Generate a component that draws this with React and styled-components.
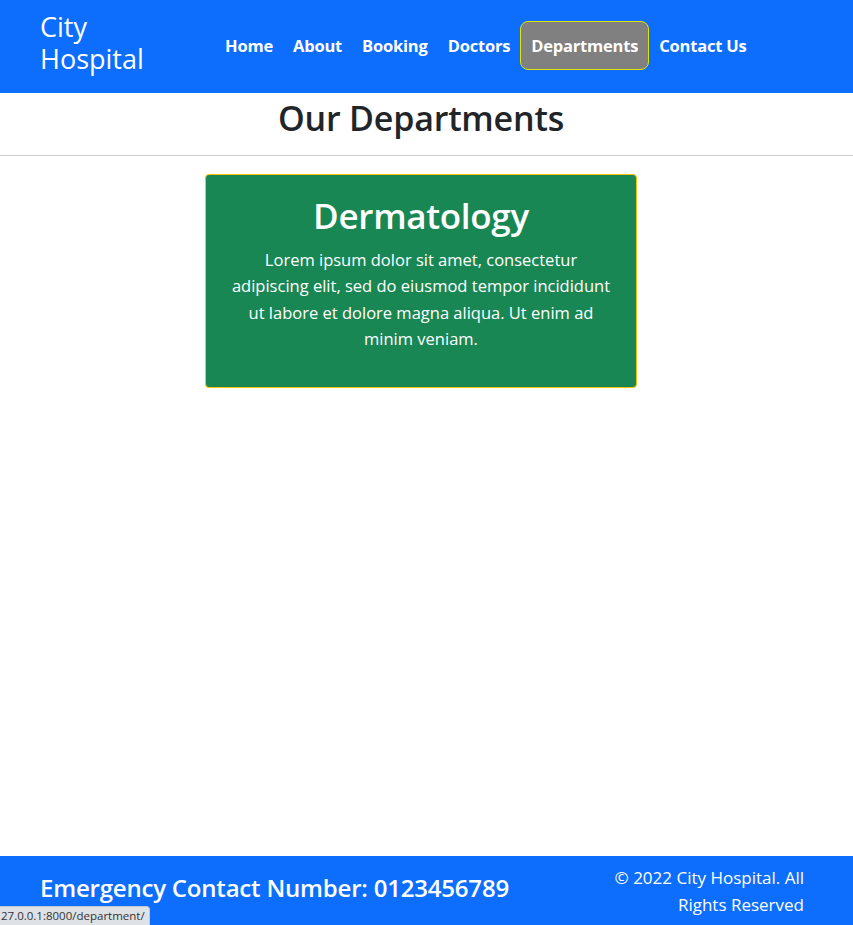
import React from 'react';
import styled, { createGlobalStyle } from 'styled-components';

const GlobalStyle = createGlobalStyle`
  html, body {
    margin: 0;
    padding: 0;
  }
  body {
    font-family: "Open Sans", "Noto Sans", sans-serif;
    color: #212529;
    background: #fff;
  }
  * { box-sizing: border-box; }
`;

const Page = styled.div`
  min-height: 100vh;
  display: flex;
  flex-direction: column;
`;

const Navbar = styled.nav`
  background: #0d6efd;
  height: 93px;
  display: flex;
  align-items: center;
  padding: 0 40px;
`;

const Brand = styled.a`
  color: #fff;
  font-size: 27px;
  font-weight: 500;
  line-height: 32px;
  width: 120px;
  text-decoration: none;
  margin-top: -7px;
`;

const NavList = styled.ul`
  list-style: none;
  display: flex;
  align-items: center;
  margin: -2px 0 0 55px;
  padding: 0;
`;

const NavLink = styled.a`
  display: block;
  color: #fff;
  font-size: 16.5px;
  font-weight: 700;
  text-decoration: none;
  padding: ${p => (p.$active ? '12px 10px' : '12px 9px')};
  border-radius: 8px;
  border: 1px solid ${p => (p.$active ? '#e4e400' : 'transparent')};
  background: ${p => (p.$active ? '#808080' : 'transparent')};
  letter-spacing: -0.2px;
`;

const Main = styled.main`
  flex: 1;
  padding-right: 11px;
`;

const Title = styled.h1`
  margin: 0;
  padding-top: 4px;
  text-align: center;
  font-size: 34px;
  font-weight: 600;
  line-height: 42px;
  letter-spacing: -0.2px;
`;

const Rule = styled.hr`
  margin: 16px -11px 18px 0;
  border: 0;
  border-top: 1px solid #cfcfcf;
`;

const Card = styled.section`
  width: 432px;
  margin: 0 auto;
  background: #198754;
  border: 1px solid #ffc107;
  border-radius: 4px;
  color: #fff;
  text-align: center;
  padding: 18px 20px 34px;
`;

const CardTitle = styled.h2`
  margin: 0 0 8px;
  font-size: 35px;
  font-weight: 600;
  line-height: 46px;
  letter-spacing: -0.3px;
`;

const CardText = styled.p`
  margin: 0;
  font-size: 16.5px;
  line-height: 26.4px;
`;

const Footer = styled.footer`
  background: #0d6efd;
  color: #fff;
  height: 69px;
  display: grid;
  grid-template-columns: 1fr 215px;
  align-items: center;
  padding: 0 49px 0 40px;
`;

const Emergency = styled.h4`
  margin: -7px 0 0;
  font-size: 24px;
  font-weight: 600;
  letter-spacing: -0.2px;
`;

const Copy = styled.p`
  margin: 0;
  text-align: right;
  font-size: 17px;
  line-height: 27px;
`;

const StatusBubble = styled.div`
  position: fixed;
  left: 0;
  bottom: 0;
  background: #dee1e6;
  color: #333;
  border: 1px solid #c6c9ce;
  border-left: 0;
  border-bottom: 0;
  border-top-right-radius: 4px;
  font-family: "Open Sans", sans-serif;
  font-size: 11.5px;
  padding: 1px 4px 2px 1px;
`;

const links = ['Home', 'About', 'Booking', 'Doctors', 'Departments', 'Contact Us'];

export default function App() {
  return (
    <Page>
      <GlobalStyle />
      <Navbar>
        <Brand href="#">City Hospital</Brand>
        <NavList>
          {links.map(l => (
            <li key={l}>
              <NavLink href="#" $active={l === 'Departments'}>{l}</NavLink>
            </li>
          ))}
        </NavList>
      </Navbar>
      <Main>
        <Title>Our Departments</Title>
        <Rule />
        <Card>
          <CardTitle>Dermatology</CardTitle>
          <CardText>
            Lorem ipsum dolor sit amet, consectetur adipiscing elit, sed do eiusmod tempor incididunt ut labore et dolore magna aliqua. Ut enim ad minim veniam.
          </CardText>
        </Card>
      </Main>
      <Footer>
        <Emergency>Emergency Contact Number: 0123456789</Emergency>
        <Copy>© 2022 City Hospital. All Rights Reserved</Copy>
      </Footer>
      <StatusBubble>27.0.0.1:8000/department/</StatusBubble>
    </Page>
  );
}
